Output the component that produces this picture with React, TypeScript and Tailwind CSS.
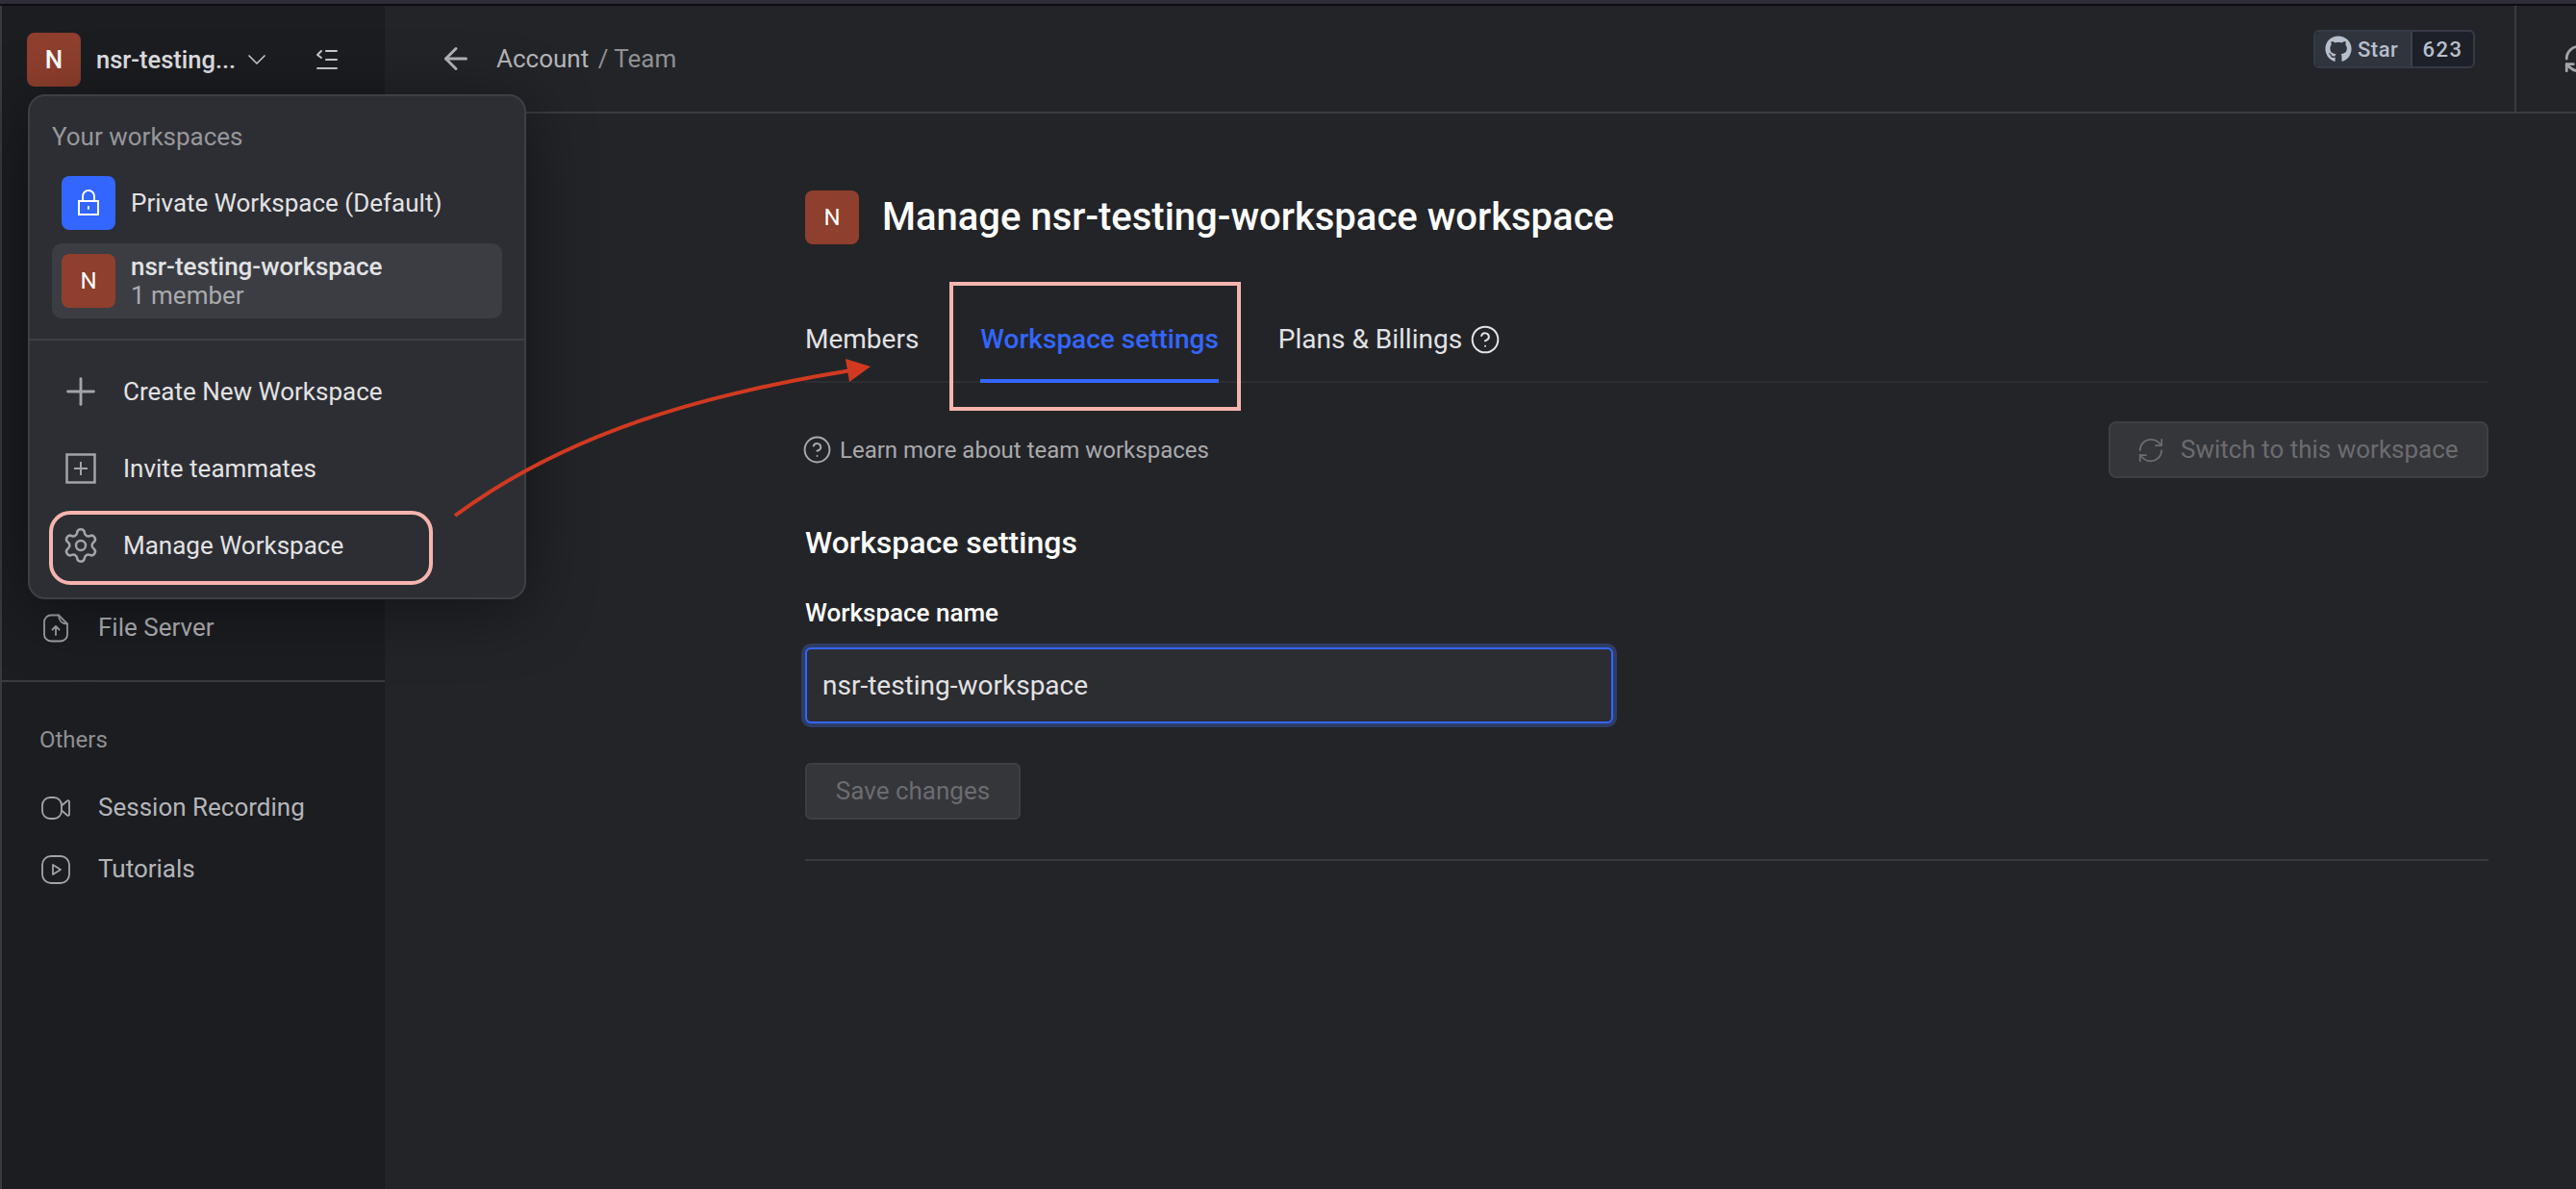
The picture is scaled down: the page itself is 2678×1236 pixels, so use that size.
import { ArrowLeft, ChevronDown, CircleHelp, Plus, RefreshCw, Settings } from "lucide-react";
import { FaGithub } from "react-icons/fa";

function Avatar({ small }: { small?: boolean }) {
  return (
    <div
      className={`w-14 h-14 shrink-0 rounded-[8px] bg-[#8f3f2d] flex items-center justify-center text-white ${
        small ? "text-[24px]" : "text-[26px] font-medium"
      }`}
    >
      N
    </div>
  );
}

function CollapseIcon() {
  return (
    <svg width="24" height="22" viewBox="0 0 24 22" fill="none" stroke="#c9cacd" strokeWidth="2" strokeLinecap="round" strokeLinejoin="round">
      <path d="M6 2 2 6l4 3" />
      <path d="M11 2h11M11 11h11M2 20h20" />
    </svg>
  );
}

function LockIcon() {
  return (
    <svg width="24" height="28" viewBox="0 0 24 28" fill="none" stroke="#fff" strokeWidth="2">
      <rect x="2" y="12" width="20" height="14" />
      <path d="M6 12V7a6 6 0 0 1 12 0v5" />
      <path d="M12 18v2" strokeLinecap="round" />
    </svg>
  );
}

function InviteIcon() {
  return (
    <svg width="32" height="32" viewBox="0 0 32 32" fill="none" stroke="#a3a4a8" strokeWidth="2.5">
      <rect x="1.5" y="1.5" width="29" height="29" />
      <path d="M16 9v14M9 16h14" strokeWidth="2" />
    </svg>
  );
}

function FileServerIcon() {
  return (
    <svg width="28" height="30" viewBox="0 0 28 30" fill="none" stroke="#a3a4a8" strokeWidth="1.8" strokeLinecap="round" strokeLinejoin="round">
      <path d="M17 1.5H9a7 7 0 0 0-7 7v13a7 7 0 0 0 7 7h10a7 7 0 0 0 7-7V10.500z" />
      <path d="M17 1.500c0 5 3 9 9 9" />
      <path d="M14 22v-9M10.500 16.500 14 13l3.500 3.500" />
    </svg>
  );
}

function VideoIcon() {
  return (
    <svg width="30" height="24" viewBox="0 0 30 24" fill="none" stroke="#a3a4a8" strokeWidth="1.8" strokeLinecap="round" strokeLinejoin="round">
      <rect x="1" y="1" width="20" height="22" rx="8" />
      <path d="M21 9.500 27 4.500c1-.8 2-.3 2 1v13c0 1.300-1 1.800-2 1l-6-5" />
    </svg>
  );
}

function PlayIcon() {
  return (
    <svg width="30" height="30" viewBox="0 0 30 30" fill="none" stroke="#a3a4a8" strokeWidth="1.8" strokeLinejoin="round">
      <rect x="1" y="1" width="28" height="28" rx="9" />
      <path d="M12 10v10l8-5z" />
    </svg>
  );
}

function SideItem({ icon, label }: { icon: React.ReactNode; label: string }) {
  return (
    <div className="flex items-center h-[37px] pl-[39px] text-[26px] text-[#b4b5b8]">
      <span className="w-[34px] mr-[27px] flex justify-center">{icon}</span>
      {label}
    </div>
  );
}

function MenuItem({ icon, label }: { icon: React.ReactNode; label: string }) {
  return (
    <div className="flex items-center h-[80px] text-[26px] text-[#e2e2e4]">
      <span className="w-[40px] ml-[33px] mr-[24px] flex justify-center">{icon}</span>
      {label}
    </div>
  );
}

function App() {
  return (
    <div className="relative w-[2678px] h-[1236px] overflow-hidden bg-[#232428] font-['Roboto',sans-serif]">
      <div className="h-1 bg-[#2e2d38]" />
      <div className="h-0.5 bg-[#0d0d10]" />

      <div className="flex h-[1230px]">
        {/* sidebar */}
        <aside className="w-[400px] shrink-0 bg-[#1c1d21] border-l-2 border-[#3a3b40] flex flex-col">
          <div className="h-[112px] flex items-center pl-[26px]">
            <Avatar />
            <span className="ml-4 w-[144px] whitespace-nowrap text-[25.500px] font-medium text-[#e2e2e4]">nsr-testing...</span>
            <ChevronDown className="ml-[7px] text-[#c9cacd]" size={32} strokeWidth={1.25} />
            <span className="ml-[45px] flex">
              <CollapseIcon />
            </span>
          </div>
          <div className="pt-[516px] pb-[36px] border-b-2 border-[#3a3b40]">
            <SideItem icon={<FileServerIcon />} label="File Server" />
          </div>
          <div className="pt-[42px] pl-[39px] text-[24px] text-[#8f9094]">Others</div>
          <div className="pt-[34px] flex flex-col gap-[27px]">
            <SideItem icon={<VideoIcon />} label="Session Recording" />
            <SideItem icon={<PlayIcon />} label="Tutorials" />
          </div>
        </aside>

        {/* main */}
        <main className="flex-1 min-w-0">
          <header className="h-[112px] border-b-2 border-[#3a3b40] flex items-center pl-[56px]">
            <ArrowLeft className="text-[#b4b5b8]" size={36} strokeWidth={2} />
            <div className="ml-[24px] text-[26px] text-[#b4b5b8]">
              Account <span className="ml-[3px] text-[#8f9094]">/ Team</span>
            </div>
            <div className="ml-auto mr-[41px] -mt-[20px] h-[40px] w-[168px] flex rounded-[6px] border-2 border-[#363a44] text-[#b6bfcc] text-[22px] font-medium">
              <div className="w-[101px] flex items-center pl-[10px] gap-[6px] bg-[#2f343d] border-r-2 border-[#3d424c] rounded-l-[5px] tracking-[0.5px]">
                <FaGithub size={28} />
                <span>Star</span>
              </div>
              <div className="flex-1 flex items-center justify-center bg-[#1d2027] rounded-r-[5px] tracking-[1.5px]">623</div>
            </div>
            <div className="w-[64px] h-full border-l-2 border-[#3a3b40] shrink-0 overflow-hidden pl-[48px] pt-[38px]">
              <RefreshCw className="text-[#a3a4a8]" size={34} strokeWidth={2} />
            </div>
          </header>

          <div className="ml-[437px] w-[1750px]">
            <div className="flex items-center gap-[24px] pt-[78px]">
              <Avatar small />
              <h1 className="text-[40px] font-medium text-white">Manage nsr-testing-workspace workspace</h1>
            </div>

            <div className="flex gap-[64px] mt-[64px] h-[78px] border-b-2 border-[#2d2e31] text-[28px] text-[#e2e2e4]">
              <div className="pt-[12px]">Members</div>
              <div className="pt-[12px] h-[78px] border-b-4 border-[#3366ff] text-[#3366ff] font-medium">Workspace settings</div>
              <div className="-ml-[2px] pt-[12px] flex items-start gap-[8px]">
                Plans & Billings
                <CircleHelp className="mt-[5px]" size={32} strokeWidth={1.5} />
              </div>
            </div>

            <div className="flex items-center justify-between mt-[40px]">
              <div className="flex items-center gap-[8px] -ml-[3px] text-[24px] text-[#a9aaad]">
                <CircleHelp size={31} strokeWidth={1.5} />
                Learn more about team workspaces
              </div>
              <button className="w-[395px] h-[59px] rounded-[8px] border-2 border-[#3e3f44] bg-[#35363a] text-[#6b6c70] text-[26px] flex items-center pl-[27px] gap-[16px]">
                <RefreshCw size={30} strokeWidth={1.4} />
                Switch to this workspace
              </button>
            </div>

            <h2 className="mt-[43px] text-[32px] font-medium text-white">Workspace settings</h2>
            <label className="block mt-[30px] text-[26px] font-medium text-white">Workspace name</label>
            <div className="mt-[16px] w-[840px] h-[79px] rounded-[6px] border-2 border-[#3366ff] bg-[#2c2d31] ring-4 ring-[#2e3d66] flex items-center pl-[16px] text-[28px] text-[#e2e2e4]">
              nsr-testing-workspace
            </div>
            <button className="block mt-[41px] w-[224px] h-[59px] rounded-[6px] border-2 border-[#3e3f44] bg-[#35363a] text-[#6b6c70] text-[26px]">
              Save changes
            </button>
            <div className="mt-[41px] border-b-2 border-[#3a3b40]" />
          </div>
        </main>
      </div>

      {/* workspace dropdown, open */}
      <div className="absolute left-[29px] top-[98px] w-[518px] h-[525px] rounded-[18px] border-2 border-[#3e3f44] bg-[#2d2e33] shadow-[0_10px_70px_rgba(0,0,0,0.45)]">
        <div className="pt-[23px] pl-[23px] text-[26px] text-[#96979b]">Your workspaces</div>
        <div className="flex items-center gap-[16px] mt-[21px] ml-[33px] text-[26px] text-[#e2e2e4]">
          <div className="w-14 h-14 rounded-[8px] bg-[#3366ff] flex items-center justify-center">
            <LockIcon />
          </div>
          Private Workspace (Default)
        </div>
        <div className="flex items-center gap-[16px] mx-[23px] mt-[14px] h-[78px] pl-[10px] rounded-[10px] bg-[#3c3d43]">
          <Avatar small />
          <div className="leading-[30px]">
            <div className="text-[26px] font-medium text-[#e2e2e4]">nsr-testing-workspace</div>
            <div className="text-[26px] text-[#a9aaad]">1 member</div>
          </div>
        </div>
        <div className="mt-[21px] pt-[13px] border-t-2 border-[#3e3f44]">
          <MenuItem icon={<Plus className="text-[#a3a4a8] shrink-0" size={46} strokeWidth={1.5} />} label="Create New Workspace" />
          <MenuItem icon={<InviteIcon />} label="Invite teammates" />
          <MenuItem icon={<Settings className="text-[#a3a4a8] shrink-0" size={40} strokeWidth={1.5} />} label="Manage Workspace" />
        </div>
      </div>

      {/* annotations drawn on the screenshot */}
      <div className="absolute left-[51px] top-[531px] w-[399px] h-[77px] rounded-[22px] border-[4px] border-[#f5b5ae]" />
      <div className="absolute left-[987px] top-[293px] w-[303px] h-[134px] border-[4px] border-[#f5b5ae]" />
      <svg className="absolute left-[460px] top-[360px]" width="460" height="190" viewBox="460 360 460 190" fill="none">
        <path d="M473 536C590 450 730 410 885 385" stroke="#d13a20" strokeWidth="4" />
        <path d="M905 381 879 373 883 397z" fill="#d13a20" />
      </svg>
    </div>
  );
}

export default App;
